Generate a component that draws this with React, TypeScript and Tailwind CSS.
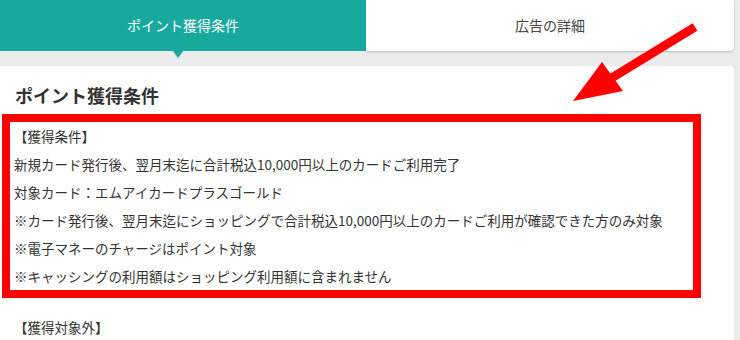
const lines = [
  "【獲得条件】",
  "新規カード発行後、翌月末迄に合計税込10,000円以上のカードご利用完了",
  "対象カード：エムアイカードプラスゴールド",
  "※カード発行後、翌月末迄にショッピングで合計税込10,000円以上のカードご利用が確認できた方のみ対象",
  "※電子マネーのチャージはポイント対象",
  "※キャッシングの利用額はショッピング利用額に含まれません",
];

function Arrow() {
  // red annotation arrow pointing at the conditions box
  return (
    <svg className="absolute left-0 top-0 pointer-events-none" width="740" height="340" viewBox="0 0 740 340">
      <line x1="695" y1="27" x2="605" y2="82" stroke="#ff0000" strokeWidth="9" />
      <polygon points="573,101 602,62 623,91" fill="#ff0000" />
    </svg>
  );
}

export default function App() {
  return (
    <div
      className="relative w-[740px] h-[340px] overflow-hidden bg-[#ebebeb] text-[#333]"
      style={{ fontFamily: '"Noto Sans CJK JP", "Noto Sans", sans-serif' }}
    >
      <div className="flex w-[734px] h-[51px]">
        <div className="relative flex w-[366px] items-center justify-center bg-[#18a99e] text-[14px] text-white">
          ポイント獲得条件
          <span className="absolute left-[172px] top-[50px] h-0 w-0 border-x-[6px] border-t-[8px] border-x-transparent border-t-[#18a99e]" />
        </div>
        <div className="flex flex-1 items-center justify-center rounded-br-[4px] bg-white text-[14px] text-[#444] shadow-[0_1px_2px_rgba(0,0,0,0.18)]">
          広告の詳細
        </div>
      </div>

      <div className="mt-[15px] w-[734px] h-[300px] rounded-tr-[4px] bg-white pt-[17px]">
        <h2 className="px-[15px] text-[18px] font-bold leading-[24px]">ポイント獲得条件</h2>
        <div className="ml-[2px] mt-[7px] w-[699px] border-8 border-[#ff0000] pl-[4px]">
          {lines.map((t) => (
            <p key={t} className="text-[13.5px] leading-[28px]">
              {t}
            </p>
          ))}
        </div>
        <p className="mt-[15px] pl-[14px] text-[13.5px] leading-[28px]">【獲得対象外】</p>
      </div>

      <Arrow />
    </div>
  );
}
